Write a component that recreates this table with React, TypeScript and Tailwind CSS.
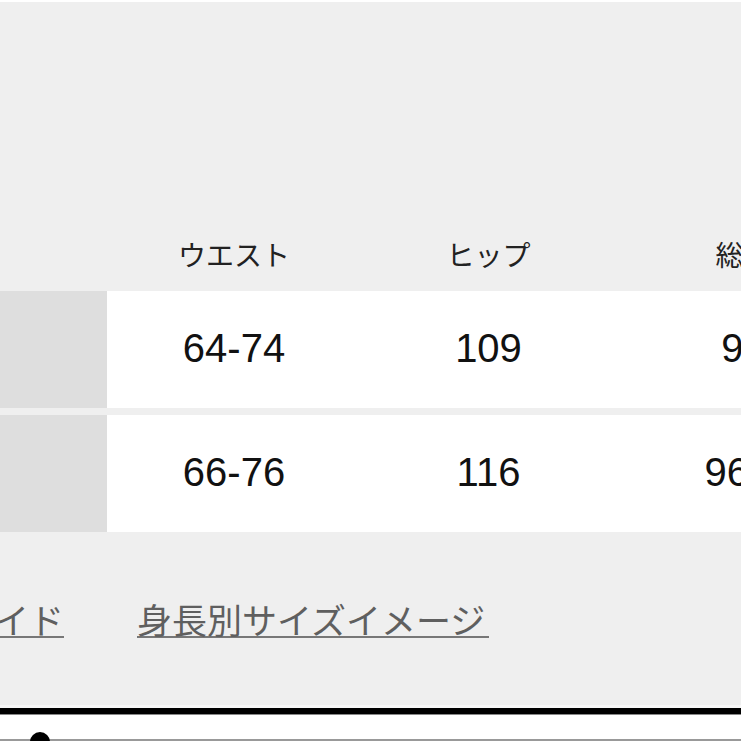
import React from "react";

const jp = { fontFamily: '"Noto Sans CJK JP", "Noto Sans", sans-serif' };
const num = { fontFamily: '"Liberation Sans", Arial, sans-serif' };

const rows = [
  { waist: "64-74", hip: "109", length: "95" },
  { waist: "66-76", hip: "116", length: "96.5" },
];

function App() {
  return (
    <div className="w-[741px] h-[741px] overflow-hidden bg-white flex flex-col">
      <div className="mt-[2px] bg-[#efefef] flex flex-col h-[703px]">
        {/* header */}
        <div
          className="grid grid-cols-[107px_254px_255px_255px] h-[289px] items-end pb-[17px] text-[28px] leading-[40px] text-[#222] whitespace-nowrap"
          style={jp}
        >
          <div />
          <div className="text-center">ウエスト</div>
          <div className="text-center">ヒップ</div>
          <div className="text-center">総丈</div>
        </div>

        {/* rows */}
        <div className="flex flex-col gap-[7px]">
          {rows.map((r) => (
            <div
              key={r.waist}
              className="grid grid-cols-[107px_254px_255px_255px] h-[117px] text-[40px] text-[#111] whitespace-nowrap"
              style={num}
            >
              <div className="bg-[#dedede]" />
              <div className="bg-white flex items-center justify-center pb-[3px]">{r.waist}</div>
              <div className="bg-white flex items-center justify-center pb-[3px]">{r.hip}</div>
              <div className="bg-white flex items-center justify-center pb-[3px]">{r.length}</div>
            </div>
          ))}
        </div>

        {/* links */}
        <div
          className="flex gap-[73px] ml-[-145px] mt-[69px] text-[35px] leading-[35px] text-[#5f5f5f] whitespace-nowrap"
          style={jp}
        >
          <span className="border-b-2 border-[#777]">サイズガイド</span>
          <span className="border-b-2 border-[#777] pr-[4px]">身長別サイズイメージ</span>
        </div>
      </div>

      <div className="h-[3px] bg-[#f7f7f7]" />
      <div className="h-[6px] bg-black" />
      <div className="h-px bg-[#888]" />
      <div className="relative flex-1 bg-white border-b-2 border-[#999]">
        <div className="absolute left-[30px] top-[17px] w-5 h-5 rounded-full bg-black" />
      </div>
    </div>
  );
}

export default App;
